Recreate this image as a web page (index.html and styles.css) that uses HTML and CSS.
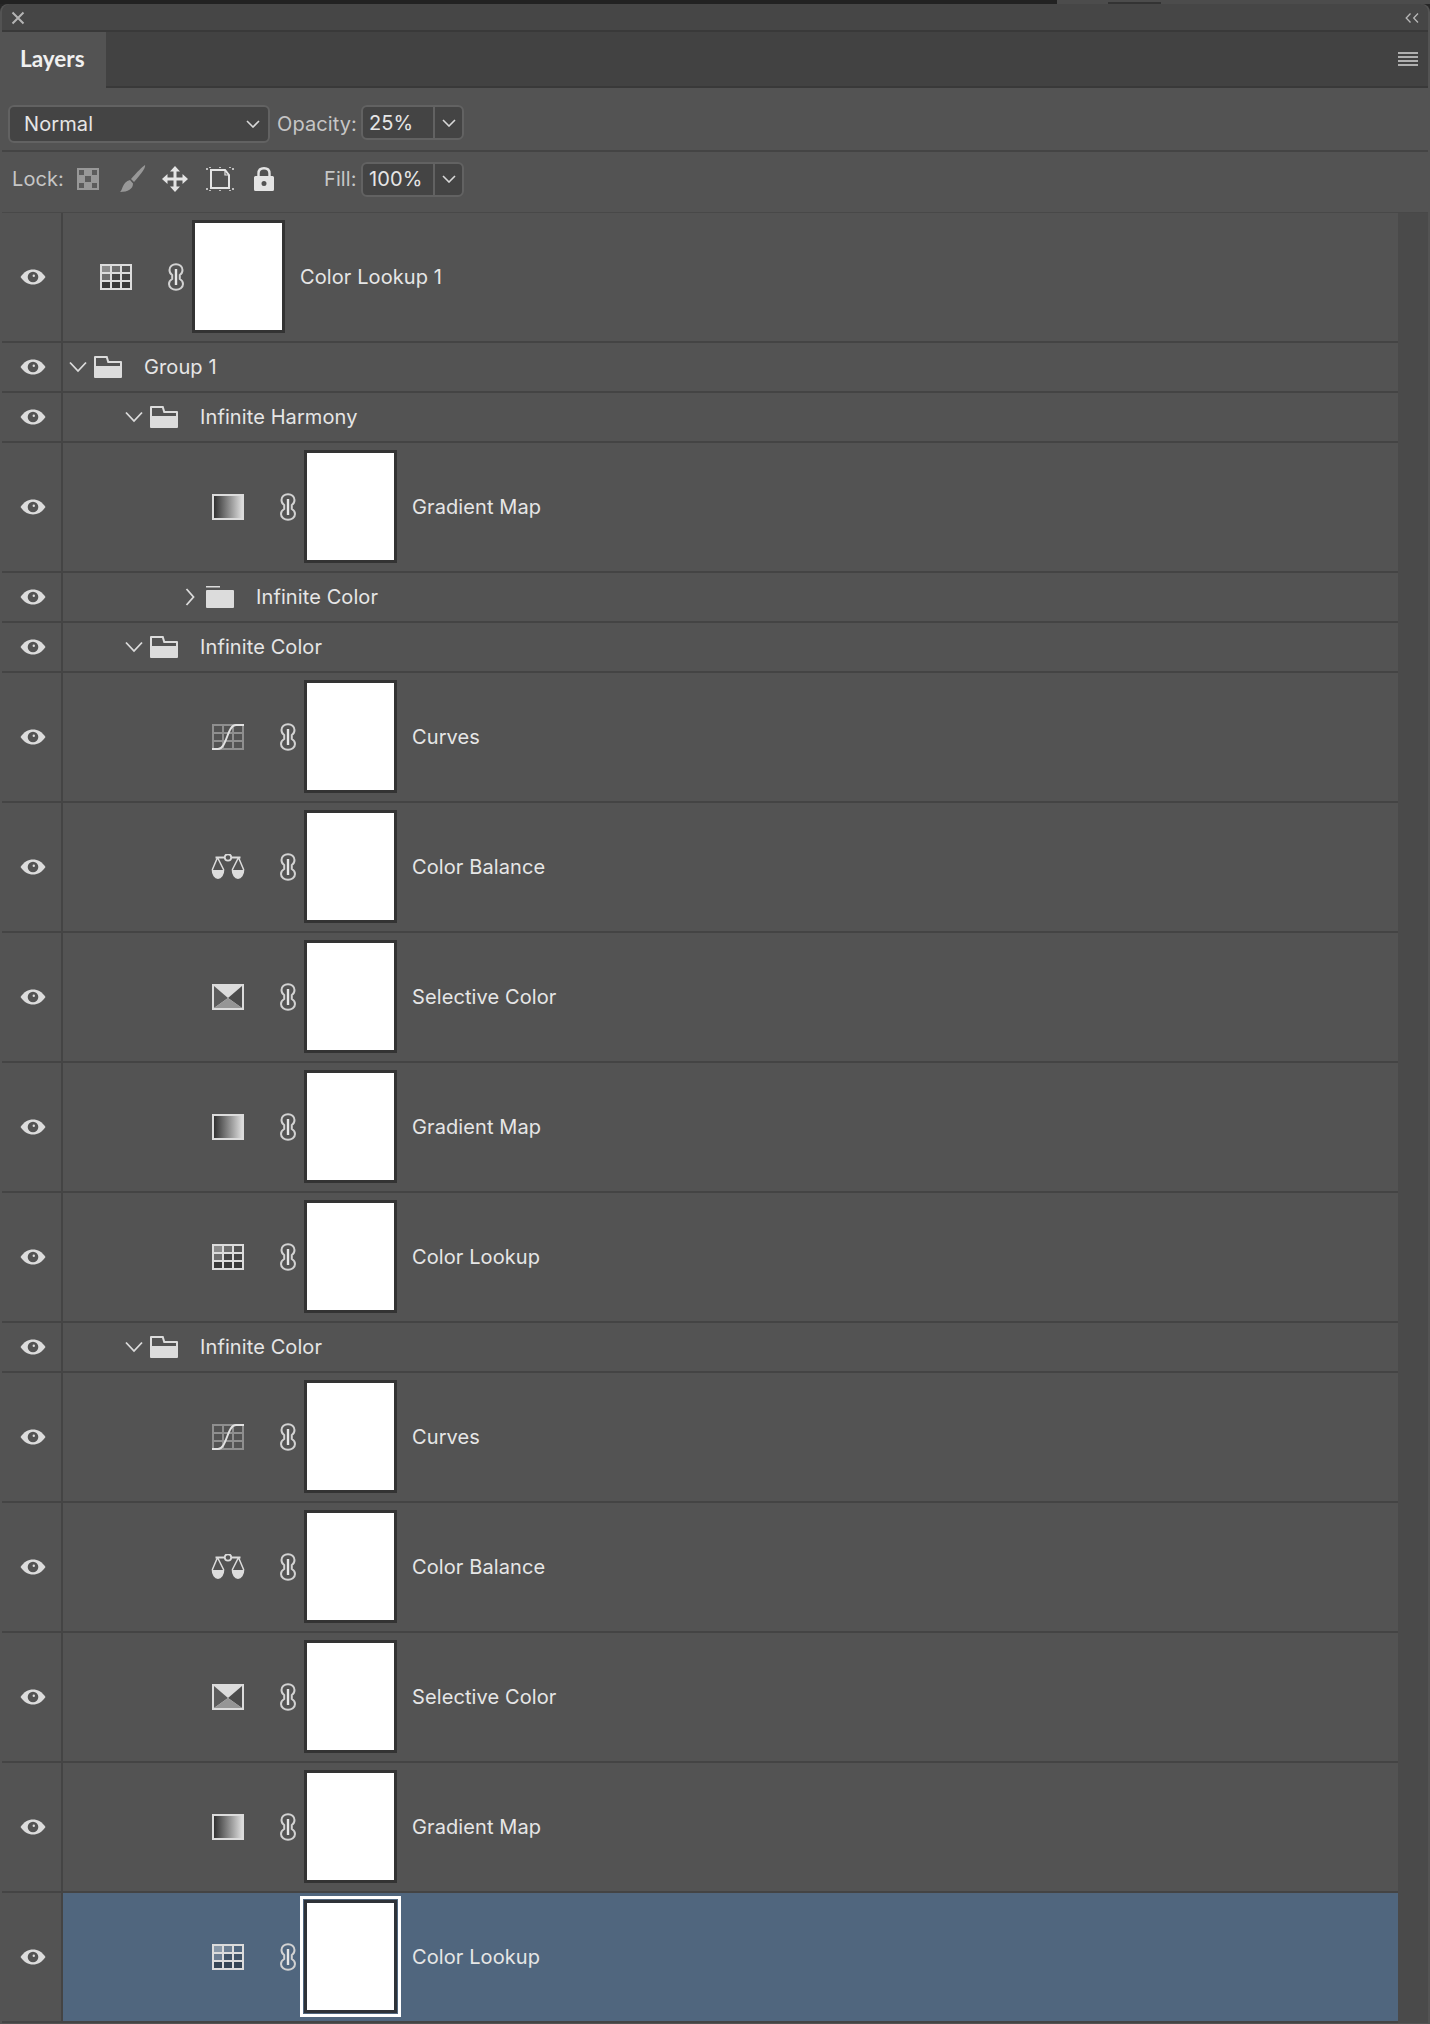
FILE: index.html
```html
<!DOCTYPE html>
<html lang="en">
<head>
  <meta charset="UTF-8">
  <title>Layers</title>
  <link rel="stylesheet" href="styles.css">
</head>
<body>
  <!-- Shared icons -->
  <svg class="sprites" width="0" height="0">
    <defs>
      <linearGradient id="grad" x1="0" x2="1" y1="0" y2="0">
        <stop offset="0" stop-color="#2b2b2b"/>
        <stop offset="1" stop-color="#e2e2e2"/>
      </linearGradient>
    </defs>
    <symbol id="eye" viewBox="0 0 26 16">
      <path d="M0.5 8C4 2.8 8.2 0.5 13 0.5S22 2.8 25.500 8C22 13.200 17.800 15.500 13 15.500S4 13.200 0.500 8Z" fill="#dcdcdc"/>
      <circle cx="13" cy="8" r="5.300" fill="#535353"/>
      <circle cx="13.800" cy="6.800" r="1.200" fill="#dcdcdc"/>
    </symbol>
    <symbol id="open" viewBox="0 0 18 12">
      <path d="M1 1.500L9 10L17 1.500" fill="none" stroke="#dcdcdc" stroke-width="1.800"/>
    </symbol>
    <symbol id="closed" viewBox="0 0 10 18">
      <path d="M1.500 1L8.500 9L1.500 17" fill="none" stroke="#dcdcdc" stroke-width="1.800"/>
    </symbol>
    <symbol id="folder-open" viewBox="0 0 28 22">
      <path d="M1 0H13.500L15 5H27A1 1 0 0 1 28 6V21A1 1 0 0 1 27 22H1A1 1 0 0 1 0 21V1A1 1 0 0 1 1 0Z" fill="#dcdcdc"/>
      <path d="M2 2H12L13.500 7H26V10H2Z" fill="#535353"/>
    </symbol>
    <symbol id="folder-closed" viewBox="0 0 28 22">
      <rect x="0" y="0" width="14" height="1.500" fill="#dcdcdc"/>
      <rect x="0" y="4" width="28" height="18" rx="1" fill="#dcdcdc"/>
    </symbol>
    <symbol id="link" viewBox="0 0 16 28">
      <path d="M4.200 13V12C2.500 11 1.500 9 1.500 7C1.500 3.500 4.500 1.200 8 1.200S14.500 3.500 14.500 7C14.500 9 13.500 11 11.800 12V16C13.500 17 15 19 15 21C15 24.500 11.500 26.800 8 26.800S1 24.500 1 21C1 19 2.500 17 4.200 16Z" fill="none" stroke="#d2d2d2" stroke-width="2"/>
      <rect x="6.800" y="6" width="2.400" height="16" fill="#e6e6e6"/>
    </symbol>
    <symbol id="lookup" viewBox="0 0 32 26">
      <rect x="1" y="1" width="10" height="8" fill="#fff" fill-opacity="0.33"/>
      <rect x="11" y="1" width="10" height="8" fill="#fff" fill-opacity="0.16"/>
      <rect x="1" y="9" width="10" height="8" fill="#fff" fill-opacity="0.16"/>
      <rect x="11" y="9" width="10" height="8" fill="#000" fill-opacity="0.18"/>
      <rect x="21" y="9" width="10" height="8" fill="#000" fill-opacity="0.18"/>
      <rect x="1" y="17" width="10" height="8" fill="#000" fill-opacity="0.33"/>
      <rect x="11" y="17" width="10" height="8" fill="#000" fill-opacity="0.33"/>
      <rect x="21" y="17" width="10" height="8" fill="#000" fill-opacity="0.33"/>
      <path d="M1 1H31V25H1ZM11 1V25M21 1V25M1 9H31M1 17H31" fill="none" stroke="#dcdcdc" stroke-width="2"/>
    </symbol>
    <symbol id="gradmap" viewBox="0 0 32 26">
      <rect x="1" y="1" width="30" height="24" fill="url(#grad)" stroke="#dcdcdc" stroke-width="2"/>
    </symbol>
    <symbol id="curves" viewBox="0 0 32 26">
      <path d="M1 1H31V25H1ZM11 1V25M21 1V25M1 9H31M1 17H31" fill="none" stroke="#8f8f8f" stroke-width="2"/>
      <path d="M0 25H6C15 25 15 1 24 1H32" fill="none" stroke="#e2e2e2" stroke-width="2"/>
    </symbol>
    <symbol id="balance" viewBox="0 0 34 26">
      <path d="M4.500 3.500H29.500" stroke="#dcdcdc" stroke-width="2"/>
      <circle cx="17" cy="3.500" r="3.200" fill="#535353" stroke="#dcdcdc" stroke-width="1.800"/>
      <path d="M6.500 3.500L1.200 16M6.500 3.500L12.800 16M27.500 3.500L21.200 16M27.500 3.500L32.800 16" fill="none" stroke="#dcdcdc" stroke-width="1.500"/>
      <path d="M0.700 16H13.300A6.300 9 0 0 1 0.700 16ZM20.700 16H33.300A6.300 9 0 0 1 20.700 16Z" fill="#dcdcdc"/>
    </symbol>
    <symbol id="selective" viewBox="0 0 32 26">
      <rect width="32" height="26" fill="#dcdcdc"/>
      <path d="M2 2L16 14L2 24Z" fill="#5c5c5c"/>
      <path d="M30 2L16 14L30 24Z" fill="#4c4c4c"/>
      <path d="M2 24L16 14L30 24Z" fill="#969696"/>
    </symbol>
    <symbol id="arrow" viewBox="0 0 14 8">
      <path d="M1 1L7 7L13 1" fill="none" stroke="#d8d8d8" stroke-width="1.600"/>
    </symbol>
  </svg>

  <!-- Bit of the window behind the panel -->
  <div class="top-strip">
    <div class="strip-dark"></div>
    <div class="strip-light"><div class="strip-mark"></div></div>
  </div>

  <div class="panel">
    <div class="title-bar">
      <svg class="close" width="14" height="14" viewBox="0 0 14 14"><path d="M1.500 1.500L12.500 12.500M12.500 1.500L1.500 12.500" stroke="#b4b4b4" stroke-width="2"/></svg>
      <svg class="collapse" width="14" height="10" viewBox="0 0 14 10"><path d="M5.500 0.500L1.200 5L5.500 9.500M13 0.500L8.700 5L13 9.500" fill="none" stroke="#b8b8b8" stroke-width="1.300"/></svg>
    </div>

    <div class="tab-bar">
      <div class="tab">Layers</div>
      <svg class="menu" width="20" height="14" viewBox="0 0 20 14"><path d="M0 1H20M0 5H20M0 9H20M0 13H20" stroke="#b0b0b0" stroke-width="2"/></svg>
    </div>

    <div class="blend-row">
      <div class="select">
        <span>Normal</span>
        <svg width="14" height="8"><use href="#arrow"/></svg>
      </div>
      <span class="label opacity-label">Opacity:</span>
      <div class="field">
        <span class="value">25%</span>
        <span class="drop"><svg width="14" height="8"><use href="#arrow"/></svg></span>
      </div>
    </div>

    <div class="lock-row">
      <span class="label lock-label">Lock:</span>
      <svg class="lock-icon lock-checker" width="22" height="22" viewBox="0 0 22 22">
        <rect width="22" height="22" fill="#989898"/>
        <path d="M2 2H7V7H2ZM15 2H20V7H15ZM8 8H14V14H8ZM2 15H7V20H2ZM15 15H20V20H15Z" fill="#5c5c5c"/>
      </svg>
      <svg class="lock-icon lock-brush" width="26" height="28" viewBox="0 0 26 28">
        <path d="M25 0C26 2 22 8 14 17L11 14C17 7 22 2 25 0Z" fill="#989898"/>
        <path d="M10 15L13 18.500C13 24 8 27 0 27C3 25 2 17 10 15Z" fill="#989898"/>
      </svg>
      <svg class="lock-icon lock-move" width="26" height="26" viewBox="0 0 26 26">
        <path d="M13 0L18 5.500H14.500V11.500H20.500V8L26 13L20.500 18V14.500H14.500V20.500H18L13 26L8 20.500H11.500V14.500H5.500V18L0 13L5.500 8V11.500H11.500V5.500H8Z" fill="#e4e4e4"/>
      </svg>
      <svg class="lock-icon lock-board" width="28" height="24" viewBox="0 0 28 24">
        <path d="M5 3H19L23 8V21H5Z" fill="none" stroke="#e4e4e4" stroke-width="2"/>
        <path d="M19 3V8H23" fill="none" stroke="#e4e4e4" stroke-width="1.200"/>
        <path d="M0 2H2M0 22H2M26 2H28M26 22H28M4 0V1M24 0V1M4 23V24M24 23V24M14 0V1M14 23V24" stroke="#e4e4e4" stroke-width="1.500"/>
      </svg>
      <svg class="lock-icon lock-padlock" width="20" height="24" viewBox="0 0 20 24">
        <path d="M4.500 10V6.500C4.500 3.200 6.800 1.300 10 1.300S15.500 3.200 15.500 6.500V10" fill="none" stroke="#e4e4e4" stroke-width="2.400"/>
        <path d="M1.500 9H18.500A1.500 1.500 0 0 1 20 10.500V22.500A1.500 1.500 0 0 1 18.500 24H1.500A1.500 1.500 0 0 1 0 22.500V10.500A1.500 1.500 0 0 1 1.500 9ZM10 14A2.500 2.500 0 1 0 10 19A2.500 2.500 0 1 0 10 14Z" fill="#e4e4e4" fill-rule="evenodd"/>
      </svg>
      <span class="label fill-label">Fill:</span>
      <div class="field">
        <span class="value">100%</span>
        <span class="drop"><svg width="14" height="8"><use href="#arrow"/></svg></span>
      </div>
    </div>

    <div class="list-wrap">
      <div class="layers">
        <div class="layer adj level-0">
          <div class="eye"><svg width="26" height="16"><use href="#eye"/></svg></div>
          <div class="info">
            <svg class="type" width="32" height="26"><use href="#lookup"/></svg>
            <svg class="link" width="16" height="28"><use href="#link"/></svg>
            <div class="thumb"></div>
            <span class="name">Color Lookup 1</span>
          </div>
        </div>

        <div class="layer group level-0">
          <div class="eye"><svg width="26" height="16"><use href="#eye"/></svg></div>
          <div class="info">
            <span class="twist"><svg width="18" height="12"><use href="#open"/></svg></span>
            <svg class="folder" width="28" height="22"><use href="#folder-open"/></svg>
            <span class="name">Group 1</span>
          </div>
        </div>

        <div class="layer group level-1">
          <div class="eye"><svg width="26" height="16"><use href="#eye"/></svg></div>
          <div class="info">
            <span class="twist"><svg width="18" height="12"><use href="#open"/></svg></span>
            <svg class="folder" width="28" height="22"><use href="#folder-open"/></svg>
            <span class="name">Infinite Harmony</span>
          </div>
        </div>

        <div class="layer adj level-2">
          <div class="eye"><svg width="26" height="16"><use href="#eye"/></svg></div>
          <div class="info">
            <svg class="type" width="32" height="26"><use href="#gradmap"/></svg>
            <svg class="link" width="16" height="28"><use href="#link"/></svg>
            <div class="thumb"></div>
            <span class="name">Gradient Map</span>
          </div>
        </div>

        <div class="layer group level-2">
          <div class="eye"><svg width="26" height="16"><use href="#eye"/></svg></div>
          <div class="info">
            <span class="twist"><svg width="10" height="18"><use href="#closed"/></svg></span>
            <svg class="folder" width="28" height="22"><use href="#folder-closed"/></svg>
            <span class="name">Infinite Color</span>
          </div>
        </div>

        <div class="layer group level-1">
          <div class="eye"><svg width="26" height="16"><use href="#eye"/></svg></div>
          <div class="info">
            <span class="twist"><svg width="18" height="12"><use href="#open"/></svg></span>
            <svg class="folder" width="28" height="22"><use href="#folder-open"/></svg>
            <span class="name">Infinite Color</span>
          </div>
        </div>

        <div class="layer adj level-2">
          <div class="eye"><svg width="26" height="16"><use href="#eye"/></svg></div>
          <div class="info">
            <svg class="type" width="32" height="26"><use href="#curves"/></svg>
            <svg class="link" width="16" height="28"><use href="#link"/></svg>
            <div class="thumb"></div>
            <span class="name">Curves</span>
          </div>
        </div>

        <div class="layer adj level-2">
          <div class="eye"><svg width="26" height="16"><use href="#eye"/></svg></div>
          <div class="info">
            <svg class="type type-wide" width="34" height="26"><use href="#balance"/></svg>
            <svg class="link" width="16" height="28"><use href="#link"/></svg>
            <div class="thumb"></div>
            <span class="name">Color Balance</span>
          </div>
        </div>

        <div class="layer adj level-2">
          <div class="eye"><svg width="26" height="16"><use href="#eye"/></svg></div>
          <div class="info">
            <svg class="type" width="32" height="26"><use href="#selective"/></svg>
            <svg class="link" width="16" height="28"><use href="#link"/></svg>
            <div class="thumb"></div>
            <span class="name">Selective Color</span>
          </div>
        </div>

        <div class="layer adj level-2">
          <div class="eye"><svg width="26" height="16"><use href="#eye"/></svg></div>
          <div class="info">
            <svg class="type" width="32" height="26"><use href="#gradmap"/></svg>
            <svg class="link" width="16" height="28"><use href="#link"/></svg>
            <div class="thumb"></div>
            <span class="name">Gradient Map</span>
          </div>
        </div>

        <div class="layer adj level-2">
          <div class="eye"><svg width="26" height="16"><use href="#eye"/></svg></div>
          <div class="info">
            <svg class="type" width="32" height="26"><use href="#lookup"/></svg>
            <svg class="link" width="16" height="28"><use href="#link"/></svg>
            <div class="thumb"></div>
            <span class="name">Color Lookup</span>
          </div>
        </div>

        <div class="layer group level-1">
          <div class="eye"><svg width="26" height="16"><use href="#eye"/></svg></div>
          <div class="info">
            <span class="twist"><svg width="18" height="12"><use href="#open"/></svg></span>
            <svg class="folder" width="28" height="22"><use href="#folder-open"/></svg>
            <span class="name">Infinite Color</span>
          </div>
        </div>

        <div class="layer adj level-2">
          <div class="eye"><svg width="26" height="16"><use href="#eye"/></svg></div>
          <div class="info">
            <svg class="type" width="32" height="26"><use href="#curves"/></svg>
            <svg class="link" width="16" height="28"><use href="#link"/></svg>
            <div class="thumb"></div>
            <span class="name">Curves</span>
          </div>
        </div>

        <div class="layer adj level-2">
          <div class="eye"><svg width="26" height="16"><use href="#eye"/></svg></div>
          <div class="info">
            <svg class="type type-wide" width="34" height="26"><use href="#balance"/></svg>
            <svg class="link" width="16" height="28"><use href="#link"/></svg>
            <div class="thumb"></div>
            <span class="name">Color Balance</span>
          </div>
        </div>

        <div class="layer adj level-2">
          <div class="eye"><svg width="26" height="16"><use href="#eye"/></svg></div>
          <div class="info">
            <svg class="type" width="32" height="26"><use href="#selective"/></svg>
            <svg class="link" width="16" height="28"><use href="#link"/></svg>
            <div class="thumb"></div>
            <span class="name">Selective Color</span>
          </div>
        </div>

        <div class="layer adj level-2">
          <div class="eye"><svg width="26" height="16"><use href="#eye"/></svg></div>
          <div class="info">
            <svg class="type" width="32" height="26"><use href="#gradmap"/></svg>
            <svg class="link" width="16" height="28"><use href="#link"/></svg>
            <div class="thumb"></div>
            <span class="name">Gradient Map</span>
          </div>
        </div>

        <div class="layer adj level-2 selected">
          <div class="eye"><svg width="26" height="16"><use href="#eye"/></svg></div>
          <div class="info">
            <svg class="type" width="32" height="26"><use href="#lookup"/></svg>
            <svg class="link" width="16" height="28"><use href="#link"/></svg>
            <div class="thumb"></div>
            <span class="name">Color Lookup</span>
          </div>
        </div>
      </div>
      <div class="scrollbar"></div>
    </div>
  </div>
</body>
</html>
```

FILE: styles.css
```css
* {
  box-sizing: border-box;
}

html, body {
  margin: 0;
  padding: 0;
  height: 100%;
}

body {
  background-color: #272727;
  color: #e6e6e6;
  font-family: Inter, "Noto Sans", sans-serif;
  font-size: 20px;
  letter-spacing: 0.1px;
  overflow: hidden;
}

.sprites {
  display: block;
  height: 0;
}

/* Strip above the panel */
.top-strip {
  display: flex;
  height: 4px;
}
.strip-dark {
  width: 1057px;
  background-color: #222;
}
.strip-light {
  flex: 1;
  padding-left: 51px;
  background-color: #4c4c4c;
}
.strip-mark {
  width: 53px;
  height: 2px;
  margin-top: 2px;
  background-color: #333;
}

.panel {
  height: 2020px;
  width: 1430px;
  padding: 0 2px;
  background-color: #535353;
  border-radius: 8px 8px 0 0;
}

/* Title bar */
.title-bar {
  display: flex;
  align-items: center;
  justify-content: space-between;
  height: 28px;
  padding: 2px 9px 0 9px;
  background-color: #464646;
  border-bottom: 2px solid #393939;
  border-radius: 8px 8px 0 0;
}

/* Tabs */
.tab-bar {
  display: flex;
  align-items: center;
  justify-content: space-between;
  height: 56px;
  padding-right: 10px;
  background-color: #424242;
  border-bottom: 2px solid #393939;
}
.tab {
  display: flex;
  align-items: center;
  width: 104px;
  height: 56px;
  padding: 0 0 4px 18px;
  margin-bottom: -2px;
  background-color: #535353;
  color: #f0f0f0;
  font-family: Lato, sans-serif;
  font-size: 22.5px;
  font-weight: 700;
  letter-spacing: 0;
}

/* Blend mode and lock rows */
.blend-row {
  display: flex;
  align-items: flex-start;
  height: 64px;
  padding: 17px 0 0 6px;
  border-bottom: 2px solid #444;
}
.select {
  display: flex;
  align-items: center;
  justify-content: space-between;
  width: 262px;
  height: 38px;
  padding: 0 8px 0 14px;
  background-color: #444;
  border: 2px solid #626262;
  border-radius: 6px;
}
.label {
  color: #c6c6c6;
}
.opacity-label {
  margin-left: 7px;
  width: 84px;
  line-height: 38px;
}
.field {
  display: flex;
  width: 103px;
  height: 35px;
  background-color: #444;
  border: 2px solid #626262;
  border-radius: 6px;
}
.value {
  flex: 1;
  padding-left: 6px;
  line-height: 31px;
}
.blend-row .value {
  line-height: 33px;
}
.drop {
  display: flex;
  align-items: center;
  justify-content: center;
  width: 29px;
  border-left: 2px solid #626262;
}

.lock-row {
  display: flex;
  align-items: center;
  height: 61px;
  padding: 0 0 6px 10px;
  border-bottom: 1px solid #484848;
}
.lock-label {
  width: 65px;
}
.lock-icon {
  flex: none;
}
.lock-brush {
  margin-left: 21px;
}
.lock-move {
  margin-left: 16px;
}
.lock-board {
  margin-left: 18px;
}
.lock-padlock {
  margin-left: 20px;
}
.fill-label {
  margin-left: 50px;
  width: 37px;
}

/* Layer list */
.list-wrap {
  display: flex;
}
.layers {
  flex: 1;
}
.scrollbar {
  width: 30px;
  background-color: #4a4a4a;
}

.layer {
  display: flex;
  border-bottom: 2px solid #444;
}
.layer.adj {
  height: 130px;
}
.layer.group {
  height: 50px;
}

.eye {
  display: flex;
  align-items: center;
  justify-content: center;
  flex: none;
  width: 61px;
  padding-left: 2px;
  border-right: 2px solid #444;
}

.info {
  display: flex;
  align-items: center;
  flex: 1;
}
.adj.level-0 .info {
  padding-left: 37px;
}
.adj.level-2 .info {
  padding-left: 149px;
}
.group.level-0 .info {
  padding-left: 6px;
}
.group.level-1 .info {
  padding-left: 62px;
}
.group.level-2 .info {
  padding-left: 118px;
}

.type {
  flex: none;
  margin-right: 36px;
}
.type-wide {
  margin-left: -1px;
  margin-right: 35px;
}
.link {
  flex: none;
}
.thumb {
  flex: none;
  width: 93px;
  height: 113px;
  margin: 0 0 2px 8px;
  background-color: #fff;
  border: 3px solid #333;
}
.adj .name {
  margin-left: 15px;
}
.twist {
  display: flex;
  align-items: center;
  justify-content: center;
  width: 18px;
}
.folder {
  margin-left: 7px;
  flex: none;
}
.group .name {
  margin-left: 22px;
}

.selected .info {
  background-color: #50667e;
}
.selected .thumb {
  border-color: #2e3238;
  box-shadow: 0 0 0 1px #50667e, 0 0 0 4px #fff;
}
```
